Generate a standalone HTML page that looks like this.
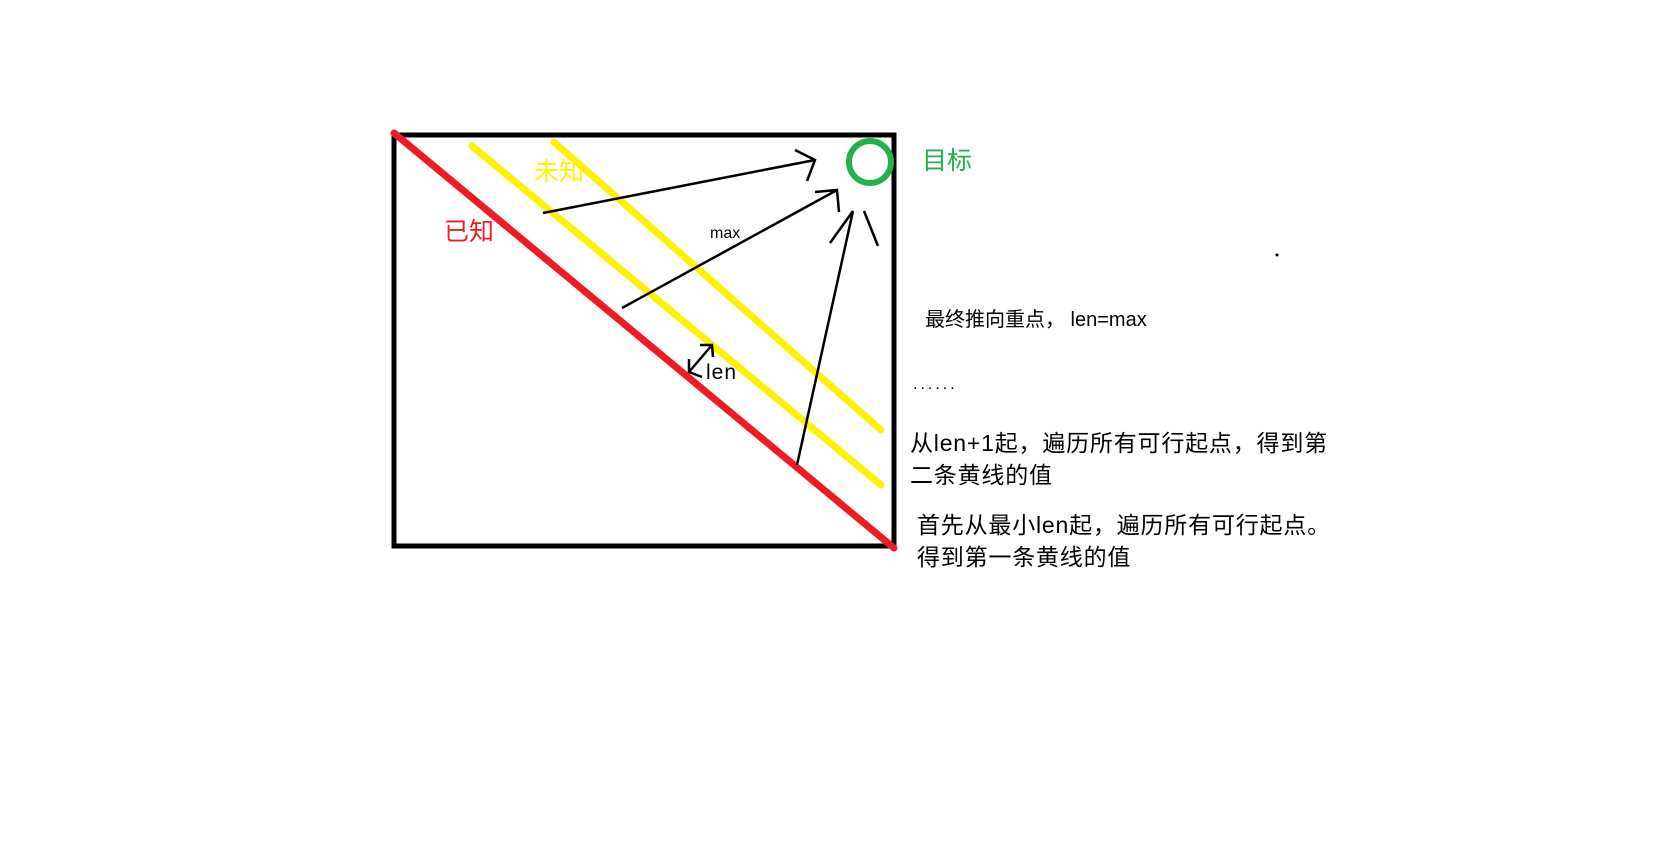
<!DOCTYPE html>
<html><head><meta charset="utf-8"><style>
html,body{margin:0;padding:0;background:#fff;}
svg{display:block}
text{font-family:"Liberation Sans","Noto Sans CJK SC",sans-serif;}
</style></head><body>
<svg width="1673" height="852" viewBox="0 0 1673 852" xmlns="http://www.w3.org/2000/svg">
<g transform="translate(-3,-1)">
<rect x="397" y="136" width="500" height="411" fill="none" stroke="#000" stroke-width="5"/>
<line x1="475" y1="147" x2="884" y2="486" stroke="#fff200" stroke-width="7" stroke-linecap="round"/>
<line x1="557" y1="143" x2="884" y2="431" stroke="#fff200" stroke-width="7" stroke-linecap="round"/>
<line x1="397" y1="134" x2="897" y2="549" stroke="#ed1c24" stroke-width="7" stroke-linecap="round"/>
<circle cx="873" cy="163" r="21" fill="none" stroke="#22b14c" stroke-width="6"/>
<g stroke="#000" stroke-width="2.5" fill="none">
<path d="M546 214 L818 161 M798 151 L818 161 L810 182"/>
<path d="M625 309 L840 191 M818 193 L840 191 L842 213"/>
<path d="M800 466 L856 212 M833 244 L856 212"/>
<path d="M867 212 L881 247"/>
<path d="M692 373 L715 346 M692 360 L692 373 L705 378 M703 346 L715 346 L716 358"/>
</g>
<text x="447" y="241" font-size="25" fill="#ed1c24">已知</text>
<text x="537" y="181" font-size="25" fill="#fff200">未知</text>
<text x="925" y="170" font-size="25" fill="#22b14c">目标</text>
<text x="713" y="239" font-size="16" fill="#000">max</text>
<text x="709" y="380" font-size="21" fill="#000" letter-spacing="1">len</text>
</g>
<text x="925" y="326" font-size="20" fill="#000">最终推向重点， len=max</text>
<text x="913" y="389" font-size="16" fill="#000" letter-spacing="3">......</text>
<text x="910" y="451" font-size="23" fill="#000" letter-spacing="0.8">从len+1起，遍历所有可行起点，得到第</text>
<text x="910" y="483" font-size="23" fill="#000" letter-spacing="0.8">二条黄线的值</text>
<text x="917" y="533" font-size="23" fill="#000" letter-spacing="0.8">首先从最小len起，遍历所有可行起点。</text>
<text x="917" y="565" font-size="23" fill="#000" letter-spacing="0.8">得到第一条黄线的值</text>
<circle cx="1277" cy="255" r="1.5" fill="#000"/>
</svg>
</body></html>
